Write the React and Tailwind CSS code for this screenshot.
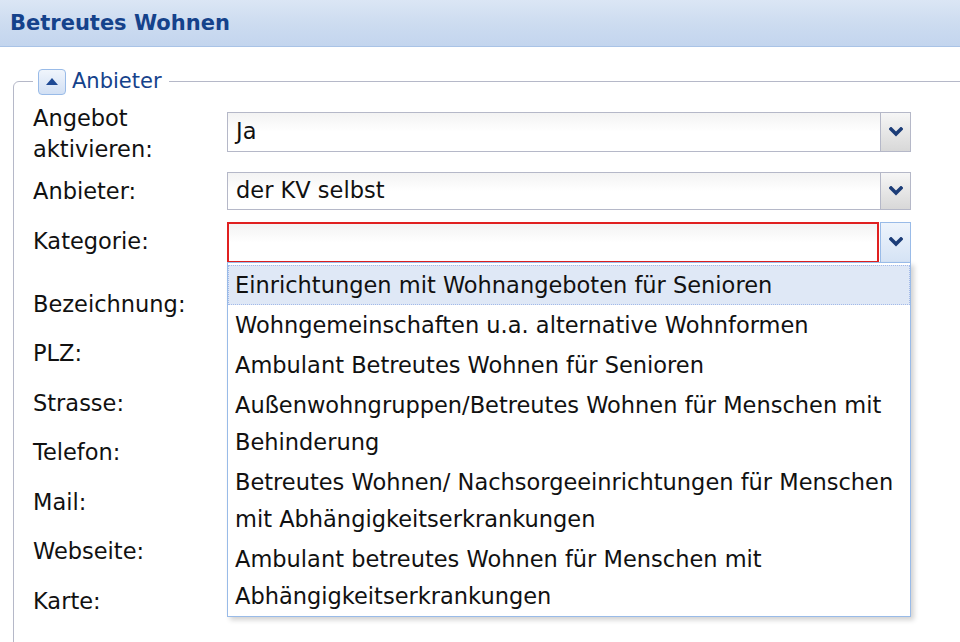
import React from 'react';

const font = "font-['DejaVu_Sans',sans-serif]";

const options = [
  ['Einrichtungen mit Wohnangeboten für Senioren'],
  ['Wohngemeinschaften u.a. alternative Wohnformen'],
  ['Ambulant Betreutes Wohnen für Senioren'],
  ['Außenwohngruppen/Betreutes Wohnen für Menschen mit', 'Behinderung'],
  ['Betreutes Wohnen/ Nachsorgeeinrichtungen für Menschen', 'mit Abhängigkeitserkrankungen'],
  ['Ambulant betreutes Wohnen für Menschen mit', 'Abhängigkeitserkrankungen'],
];

const textRows = ['Bezeichnung:', 'PLZ:', 'Strasse:', 'Telefon:', 'Mail:', 'Webseite:', 'Karte:'];

function Chevron() {
  return (
    <svg width="14" height="10" viewBox="0 0 14 10">
      <path d="M2 2 L7 7 L12 2" fill="none" stroke="#1c3d78" strokeWidth="3.5" strokeLinecap="square" />
    </svg>
  );
}

function Combo({ value, focused, height }) {
  return (
    <div className={`flex w-[684px] ${height}`}>
      <div
        className={`flex-1 flex items-center pl-[8px] border bg-gradient-to-b from-[#f3f3f3] via-white to-white ${
          focused ? 'border-[#e02020] border-2 mr-[1px]' : 'border-[#b5b8c8] border-r-0'
        }`}
      >
        {value}
      </div>
      <div
        className={`w-[31px] flex items-center justify-center border ${
          focused
            ? 'bg-gradient-to-b from-[#eef4fc] to-[#d5e3f5] border-[#99bbe8]'
            : 'bg-gradient-to-b from-[#f6f6f6] to-[#d8d8d8] border-[#b5b8c8]'
        }`}
      >
        <Chevron />
      </div>
    </div>
  );
}

export default function App() {
  return (
    <div className={`relative w-[960px] h-[642px] overflow-hidden bg-white text-[22.5px] text-[#111] ${font}`}>
      {/* Panel header */}
      <div className="h-[47px] bg-gradient-to-b from-[#dbe6f5] via-[#cddcf0] to-[#c3d5ee] border-b border-[#a9c3e6] flex items-center pl-[10px] pt-[1px]">
        <h1 className="text-[21px] font-bold text-[#15428b]">Betreutes Wohnen</h1>
      </div>

      <fieldset className="mt-[19px] ml-[13px] w-[1000px] h-[700px] border border-[#b5b8c8] rounded-tl-[6px] pl-[19px]">
        <legend className="px-[5px] pr-[7px]">
          <div className="flex items-center gap-[6px]">
            <span className="w-[28px] h-[26px] rounded-[4px] border border-[#99bbe8] bg-gradient-to-b from-[#f0f5fc] to-[#d2e0f4] flex items-center justify-center">
              <svg width="14" height="9" viewBox="0 0 14 9">
                <path d="M7 1 L13 8 L1 8 Z" fill="#1f4a94" />
              </svg>
            </span>
            <span className="text-[21px] text-[#15428b]">Anbieter</span>
          </div>
        </legend>

        {/* Angebot aktivieren */}
        <div className="flex items-start mt-[5px]">
          <label className="w-[194px] leading-[31px]">
            Angebot
            <br />
            aktivieren:
          </label>
          <div className="mt-[9px]">
            <Combo value="Ja" height="h-[40px]" />
          </div>
        </div>

        {/* Anbieter */}
        <div className="flex items-start mt-[7px]">
          <label className="w-[194px] leading-[38px]">Anbieter:</label>
          <Combo value="der KV selbst" height="h-[38px]" />
        </div>

        {/* Kategorie */}
        <div className="flex items-start mt-[12px]">
          <label className="w-[194px] leading-[38px]">Kategorie:</label>
          <Combo value="" focused height="h-[41px]" />
        </div>

        {/* Remaining fields (covered by the open list) */}
        <div className="mt-[22px] flex flex-col gap-[11.5px]">
          {textRows.map((l) => (
            <div key={l} className="flex items-start h-[38px]">
              <label className="w-[194px] leading-[38px]">{l}</label>
              {l !== 'Karte:' && <input className="w-[684px] h-[36px] border border-[#b5b8c8]" />}
            </div>
          ))}
        </div>
      </fieldset>

      {/* Open dropdown list */}
      <div className="absolute left-[227px] top-[262px] w-[684px] pt-[2px] bg-white border border-[#99bbe8] shadow-[3px_3px_5px_rgba(0,0,0,0.18)]">
        {options.map((lines, i) => (
          <div
            key={i}
            className={`pl-[6px] py-[0.5px] leading-[37px] border ${
              i === 0 ? 'bg-[#dfe8f6] border-dotted border-[#a3bae9]' : 'border-transparent'
            }`}
          >
            {lines.map((t, j) => (
              <div key={j} className="whitespace-nowrap">
                {t}
              </div>
            ))}
          </div>
        ))}
      </div>
    </div>
  );
}
